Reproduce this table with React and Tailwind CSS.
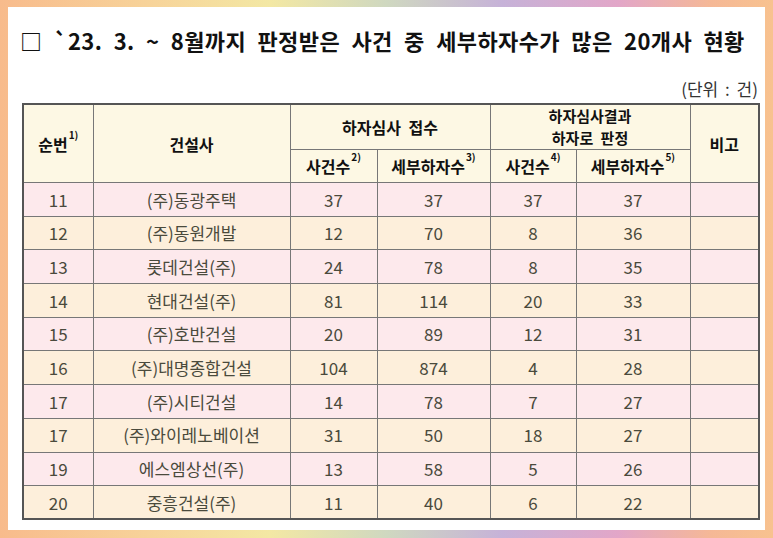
import React from "react";

const rows = [
  ["11", "(주)동광주택", "37", "37", "37", "37"],
  ["12", "(주)동원개발", "12", "70", "8", "36"],
  ["13", "롯데건설(주)", "24", "78", "8", "35"],
  ["14", "현대건설(주)", "81", "114", "20", "33"],
  ["15", "(주)호반건설", "20", "89", "12", "31"],
  ["16", "(주)대명종합건설", "104", "874", "4", "28"],
  ["17", "(주)시티건설", "14", "78", "7", "27"],
  ["17", "(주)와이레노베이션", "31", "50", "18", "27"],
  ["19", "에스엠상선(주)", "13", "58", "5", "26"],
  ["20", "중흥건설(주)", "11", "40", "6", "22"],
];

const font = { fontFamily: '"Noto Sans CJK KR", "Noto Sans", sans-serif' };

function Sup({ children }) {
  return (
    <span className="text-[10px] font-bold align-top relative top-[-2px] ml-[1px] leading-none">
      {children}
    </span>
  );
}

export default function App() {
  return (
    <div
      className="w-[773px] h-[538px] pt-[7px] pl-[8px] pr-[8px] pb-[8px] bg-[linear-gradient(to_right,#f8bb8c_0%,#f7d49a_20%,#f3e8a4_35%,#cfd8c0_50%,#c6b2d8_65%,#e2a6c8_80%,#f5b896_92%,#f8c28f_100%)]"
      style={font}
    >
      <div className="w-full h-full bg-white pt-[19px] pl-[12px] pr-[7px]">
        <div className="text-[22px] leading-[28px] font-bold text-[#111] tracking-[0.4px] [word-spacing:6px] whitespace-nowrap">
          □ `23. 3. ~ 8월까지 판정받은 사건 중 세부하자수가 많은 20개사 현황
        </div>
        <div className="mt-[24px] text-right text-[17px] leading-[21px] text-[#333] [word-spacing:3px]">
          (단위 : 건)
        </div>
        <div className="mt-[4px] pl-[2px]">
          <table className="w-[736px] border-collapse border-2 border-[#555] text-center table-fixed">
            <colgroup>
              <col className="w-[70px]" />
              <col className="w-[197px]" />
              <col className="w-[87px]" />
              <col className="w-[113px]" />
              <col className="w-[86px]" />
              <col className="w-[114px]" />
              <col className="w-[69px]" />
            </colgroup>
            <thead className="bg-[#fdf8e4] text-[#111] font-bold text-[16px]">
              <tr className="h-[45px]">
                <th rowSpan={2} className="border border-[#777] font-bold">
                  순번<Sup>1)</Sup>
                </th>
                <th rowSpan={2} className="border border-[#777] font-bold">
                  건설사
                </th>
                <th colSpan={2} className="border border-[#777] font-bold [word-spacing:4px]">
                  하자심사 접수
                </th>
                <th colSpan={2} className="border border-[#777] font-bold p-0 text-[15px] leading-[22px] [word-spacing:4px]">
                  <div>하자심사결과</div>
                  <div>하자로 판정</div>
                </th>
                <th rowSpan={2} className="border border-[#777] font-bold">
                  비고
                </th>
              </tr>
              <tr className="h-[33px]">
                <th className="border border-[#777] font-bold">
                  사건수<Sup>2)</Sup>
                </th>
                <th className="border border-[#777] font-bold">
                  세부하자수<Sup>3)</Sup>
                </th>
                <th className="border border-[#777] font-bold">
                  사건수<Sup>4)</Sup>
                </th>
                <th className="border border-[#777] font-bold">
                  세부하자수<Sup>5)</Sup>
                </th>
              </tr>
            </thead>
            <tbody className="text-[17px] text-[#4a4a3c]">
              {rows.map((r, i) => (
                <tr
                  key={i}
                  className={
                    "h-[33.7px] " + (i % 2 === 0 ? "bg-[#fde9ec]" : "bg-[#fdefdb]")
                  }
                >
                  {r.map((c, j) => (
                    <td key={j} className="border border-[#777] p-0">
                      {c}
                    </td>
                  ))}
                  <td className="border border-[#777] p-0"></td>
                </tr>
              ))}
            </tbody>
          </table>
        </div>
      </div>
    </div>
  );
}
